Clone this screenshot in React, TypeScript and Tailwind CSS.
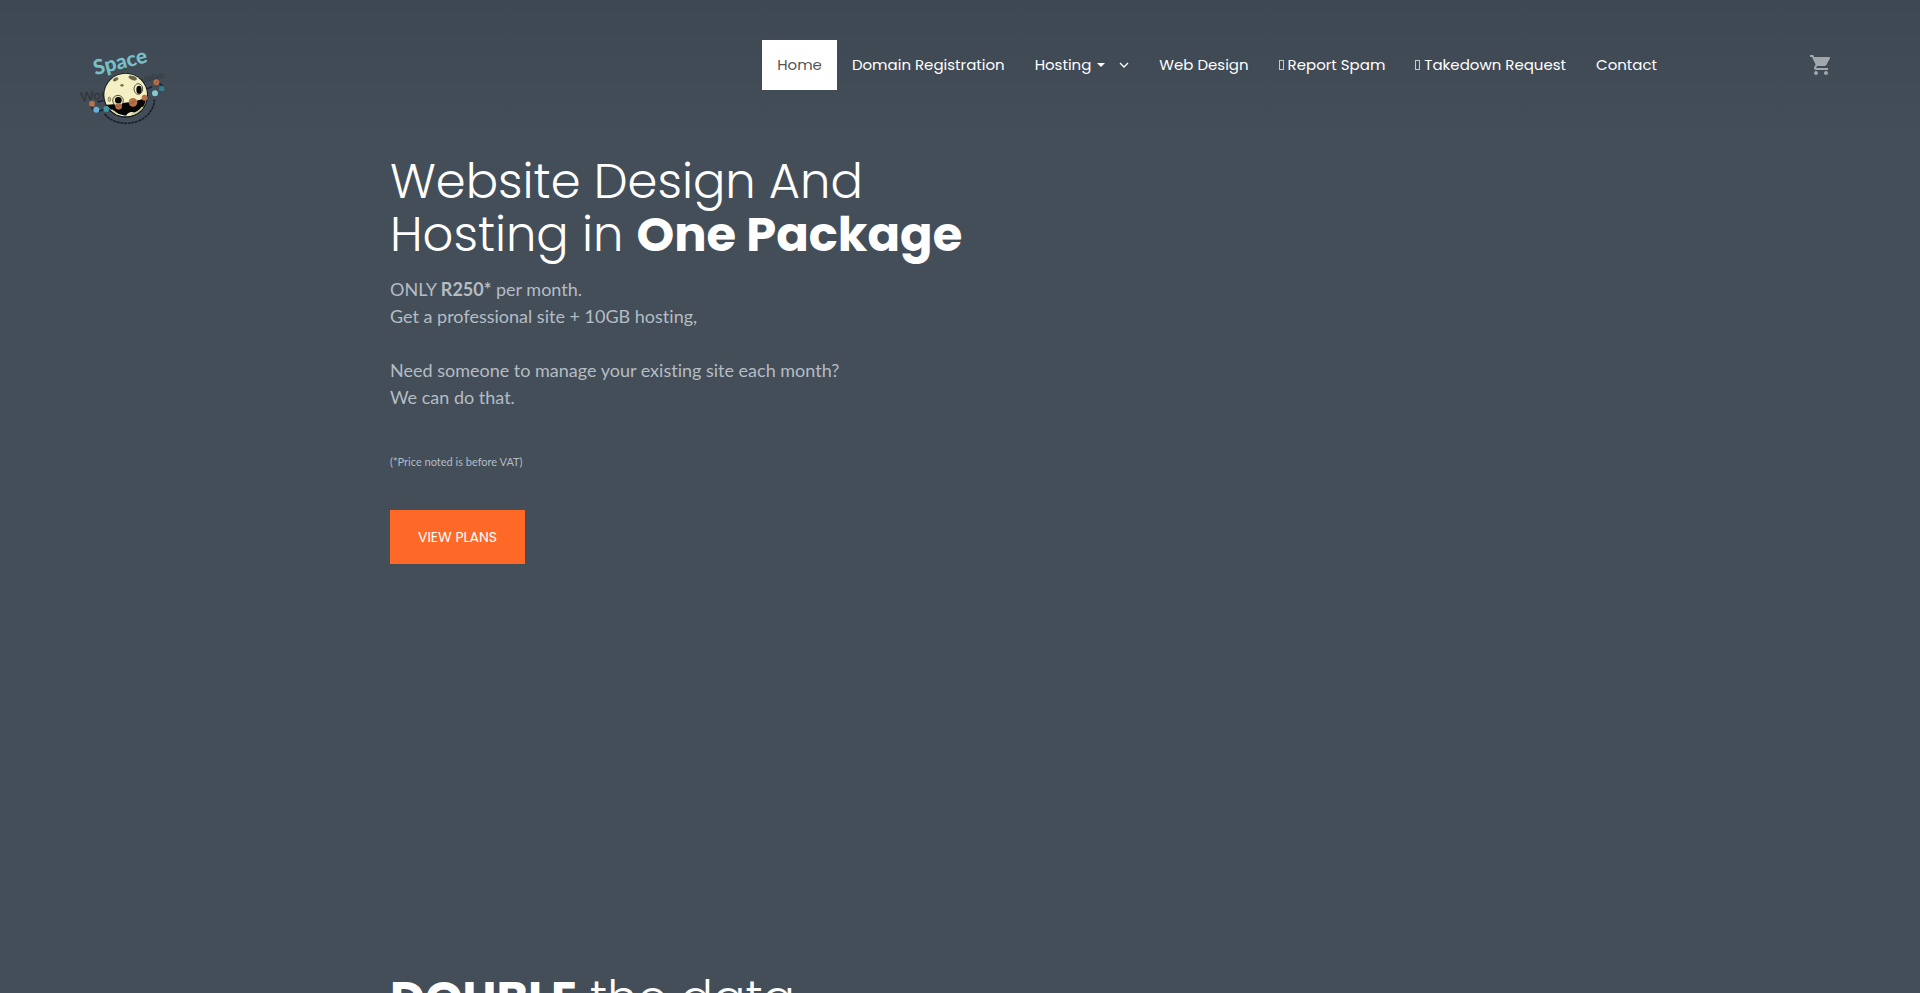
import { MdShoppingCart } from "react-icons/md";

const navItems = [
  { label: "Home", active: true },
  { label: "Domain Registration" },
  { label: "Hosting", menu: true },
  { label: "Web Design" },
  { label: "Report Spam", box: true },
  { label: "Takedown Request", box: true },
  { label: "Contact" },
];

const Logo = () => {
  return (
    <svg
      viewBox="0 0 390 330"
      className="h-[110px] w-[130px] shrink-0"
      role="img"
      aria-label="Space World Hosting"
    >
      <g fontFamily="Lato, sans-serif" fontWeight="900">
        <text x="62" y="216" fontSize="40" fill="#34393f" transform="rotate(-8 62 216)">
          Wou
        </text>
        <text x="246" y="158" fontSize="28" fill="#383d44" transform="rotate(-12 246 158)">
          uoian
        </text>
        <text x="106" y="136" fontSize="62" fill="#78c0c8" transform="rotate(-14 106 136)">
          Space
        </text>
      </g>
      {/* orbit */}
      <path
        d="M92 226c8 22 30 20 50 6M286 156c20 4 28 18 14 28M276 170l-14 6M112 216l18-4"
        fill="none"
        stroke="#1a2430"
        strokeWidth="5"
      />
      <path
        d="M134 252c26 36 104 40 136-6 8-12 14-24 13-38"
        fill="none"
        stroke="#17212d"
        strokeWidth="5"
        strokeDasharray="9 2"
      />
      {/* moon */}
      <circle cx="197" cy="196" r="67" fill="#111820" />
      <circle cx="197" cy="195" r="64" fill="#f4f0c3" />
      <path
        d="M140 224c30-2 76-6 119-20-4 26-20 44-34 46-9-7-20-4-27 7-20-3-46-12-58-33z"
        fill="#050505"
      />
      <path d="M154 240c8 4 14 8 20 14M214 253c16-3 27-12 34-22" fill="none" stroke="#d8d398" strokeWidth="5" />
      <ellipse cx="235" cy="177" rx="13" ry="16" fill="none" stroke="#57543a" strokeWidth="3" />
      <ellipse cx="237" cy="179" rx="8" ry="12" fill="#070707" />
      <circle cx="174" cy="212" r="16" fill="#e8e3b1" stroke="#57543a" strokeWidth="3" />
      <circle cx="175" cy="211" r="10" fill="#070707" />
      <ellipse cx="218" cy="144" rx="13" ry="6" fill="#69664a" transform="rotate(20 218 144)" />
      <ellipse cx="167" cy="148" rx="9" ry="5" fill="#69664a" transform="rotate(-30 167 148)" />
      <ellipse cx="186" cy="166" rx="5" ry="4" fill="#77734f" />
      <ellipse cx="148" cy="208" rx="4" ry="7" fill="#c9c48e" stroke="#69664a" strokeWidth="2" />
      {/* planets */}
      <g fill="#b5714b">
        <circle cx="96" cy="221" r="9" />
        <circle cx="176" cy="229" r="10" />
        <circle cx="219" cy="217" r="13" />
        <circle cx="254" cy="203" r="9" />
        <circle cx="289" cy="157" r="9" />
      </g>
      <path d="M210 222l17-9M170 231l12-5M283 160l12-6" stroke="#8a4d30" strokeWidth="2" />
      <circle cx="109" cy="239" r="9" fill="#69afd8" />
      <circle cx="139" cy="237" r="9" fill="#3f93a3" />
      <circle cx="285" cy="190" r="9" fill="#82cbd0" />
      <circle cx="305" cy="176" r="8" fill="#357f8d" />
    </svg>
  );
};

const Header = () => {
  return (
    <header className="flex items-start justify-between bg-linear-to-b from-[#3e4853] to-[#444e59] pr-[87px] pl-[60px]">
      <div className="pt-[30px]">
        <Logo />
      </div>
      <div className="flex items-center gap-[137px] pt-10">
        <nav className="flex h-[50px] font-[Poppins,sans-serif] text-[15px] whitespace-nowrap text-white">
          {navItems.map((item) => (
            <a
              key={item.label}
              href="#"
              className={
                item.active
                  ? "flex items-center bg-white px-[15px] text-[#555555]"
                  : "flex items-center px-[15px]"
              }
            >
              {item.box && (
                <span aria-hidden="true" className="mr-1 h-2.5 w-[5px] border border-white/70" />
              )}
              {item.label}
              {item.menu && (
                <>
                  <span className="ml-1.5 border-x-4 border-t-4 border-x-transparent border-t-white" />
                  <svg viewBox="0 0 10 6" className="ml-3.5 h-1.5 w-2.5" fill="none" aria-hidden="true">
                    <path d="M1 1l4 4 4-4" stroke="currentColor" strokeWidth="1.3" />
                  </svg>
                </>
              )}
            </a>
          ))}
        </nav>
        <button type="button" aria-label="Cart" className="text-[#a1a7ac]">
          <MdShoppingCart className="size-6" />
        </button>
      </div>
    </header>
  );
};

const Hero = () => {
  return (
    <section className="mx-auto min-h-[820px] w-full max-w-[1140px] pt-[15px] font-[Lato,sans-serif] [font-variant-ligatures:none]">
      <h1 className="font-[Poppins,sans-serif] text-5xl leading-[53px] font-light text-white">
        Website Design And
        <br />
        Hosting in <strong className="font-bold">One Package</strong>
      </h1>
      <p className="mt-[15px] text-[18px] leading-[27px] text-[#b4bcc4]">
        ONLY <strong className="font-bold">R250*</strong> per month.
        <br />
        Get a professional site + 10GB hosting,
        <br />
        <br />
        Need someone to manage your existing site each month?
        <br />
        We can do that.
      </p>
      <p className="mt-[37px] text-[11px] leading-[27px] text-[#b4bcc4]">
        (*Price noted is before VAT)
      </p>
      <a
        href="#"
        className="mt-[35px] inline-flex h-[54px] w-[135px] items-center justify-center bg-[#ff6928] font-[Poppins,sans-serif] text-sm text-white"
      >
        VIEW PLANS
      </a>
    </section>
  );
};

const DoubleData = () => {
  return (
    <section className="mx-auto w-full max-w-[1140px] pt-3">
      <h2 className="font-[Poppins,sans-serif] text-5xl leading-[53px] font-light text-white">
        <strong className="font-bold">DOUBLE</strong> the data
      </h2>
    </section>
  );
};

export default function App() {
  return (
    <main className="h-screen overflow-hidden bg-[#444e59]">
      <Header />
      <Hero />
      <DoubleData />
    </main>
  );
}
